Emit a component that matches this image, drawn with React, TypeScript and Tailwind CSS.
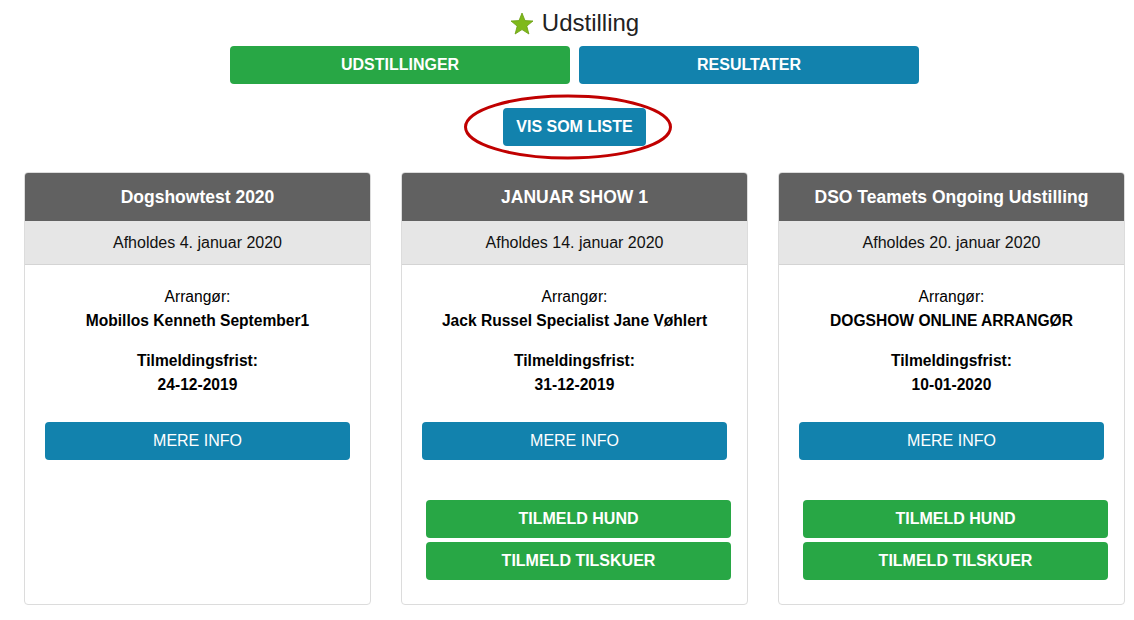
import React from "react";

interface Show {
    title: string;
    date: string;
    organizer: string;
    deadline: string;
    signup: boolean;
}

const shows: Show[] = [
    { title: "Dogshowtest 2020", date: "Afholdes 4. januar 2020", organizer: "Mobillos Kenneth September1", deadline: "24-12-2019", signup: false },
    { title: "JANUAR SHOW 1", date: "Afholdes 14. januar 2020", organizer: "Jack Russel Specialist Jane Vøhlert", deadline: "31-12-2019", signup: true },
    { title: "DSO Teamets Ongoing Udstilling", date: "Afholdes 20. januar 2020", organizer: "DOGSHOW ONLINE ARRANGØR", deadline: "10-01-2020", signup: true },
];

function Star() {
    return (
        <svg width="24" height="23" viewBox="0 0 24 23" className="mr-[8px]">
            <polygon
                points="12,1 15,8.6 23,9 16.8,14.1 18.9,22 12,17.6 5.1,22 7.2,14.1 1,9 9,8.6"
                fill="#7fb91a"
                stroke="#6a9e12"
                strokeWidth="0.8"
                strokeLinejoin="round"
            />
        </svg>
    );
}

function ShowCard({ show }: { show: Show }) {
    return (
        <div className="w-[347px] flex flex-col border border-[#dcdcdc] rounded-[4px] bg-white overflow-hidden">
            <div className="h-[48px] bg-[#616161] flex items-center justify-center text-white font-bold text-[17.5px]">
                {show.title}
            </div>
            <div className="h-[44px] bg-[#e6e6e6] border-b border-[#d4d4d4] flex items-center justify-center text-[16px] text-[#111]">
                {show.date}
            </div>
            <div className="pt-[20px] pb-[24px] flex flex-col text-center text-[15.6px] leading-[24px] text-black">
                <p>Arrangør:</p>
                <p className="font-bold">{show.organizer}</p>
                <p className="font-bold mt-[16px]">Tilmeldingsfrist:</p>
                <p className="font-bold">{show.deadline}</p>
                <div className="px-[20px] mt-[25px]">
                    <button className="w-full h-[38px] rounded-[4px] bg-[#1282ad] text-white text-[16px]">MERE INFO</button>
                </div>
                {show.signup && (
                    <div className="pl-[24px] pr-[16px] mt-[40px] flex flex-col gap-[4px]">
                        <button className="w-full h-[38px] rounded-[4px] bg-[#28a745] text-white font-bold text-[16px]">TILMELD HUND</button>
                        <button className="w-full h-[38px] rounded-[4px] bg-[#28a745] text-white font-bold text-[16px]">TILMELD TILSKUER</button>
                    </div>
                )}
            </div>
        </div>
    );
}

export default function App() {
    return (
        <div className="min-h-screen bg-white font-['Liberation_Sans',Arial,sans-serif] pl-[24px] pr-[9px]">
            <div className="w-[1101px] flex flex-col items-center">
                {/* Title */}
                <div className="flex items-center h-[44px] pt-[2px] text-[24px] text-[#222]">
                    <Star />
                    <span>Udstilling</span>
                </div>

                {/* Tabs */}
                <div className="flex gap-[9px] mt-[2px]">
                    <button className="w-[340px] h-[38px] rounded-[4px] bg-[#28a745] text-white font-bold text-[16px]">UDSTILLINGER</button>
                    <button className="w-[340px] h-[38px] rounded-[4px] bg-[#1282ad] text-white font-bold text-[16px]">RESULTATER</button>
                </div>

                {/* List toggle */}
                <div className="relative mt-[24px]">
                    <button className="w-[143px] h-[38px] rounded-[4px] bg-[#1282ad] text-white font-bold text-[16px]">VIS SOM LISTE</button>
                    <svg
                        className="absolute left-[-40px] top-[-14px] pointer-events-none"
                        width="210"
                        height="66"
                        viewBox="0 0 210 66"
                    >
                        <ellipse cx="105" cy="33" rx="102.5" ry="31" fill="none" stroke="#c00000" strokeWidth="3" />
                    </svg>
                </div>

                {/* Cards */}
                <div className="w-full flex justify-between items-stretch mt-[26px]">
                    {shows.map((show, i) => (
                        <ShowCard key={i} show={show} />
                    ))}
                </div>
            </div>
        </div>
    );
}
